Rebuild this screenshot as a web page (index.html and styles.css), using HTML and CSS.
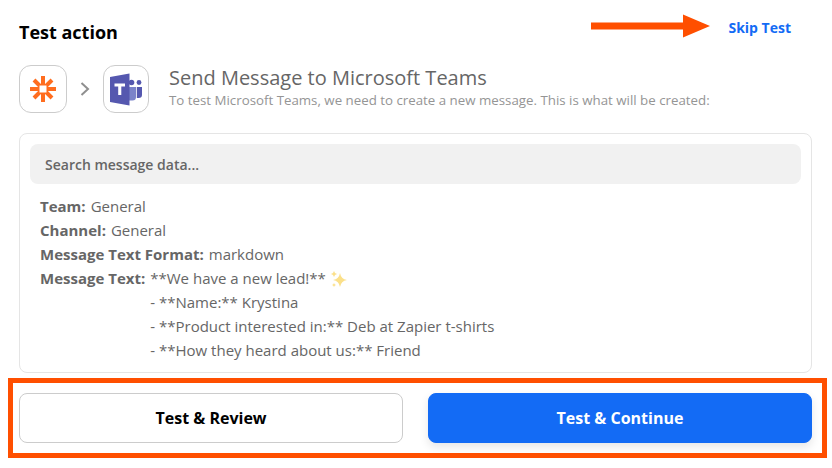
FILE: index.html
```html
<!DOCTYPE html>
<html lang="en">
<head>
    <meta charset="UTF-8">
    <meta name="viewport" content="width=device-width, initial-scale=1.0">
    <title>Test action</title>
    <link rel="stylesheet" href="styles.css">
</head>
<body>
    <div class="page">
        <div class="header">
            <h2>Test action</h2>
            <a class="skip-link" href="#">Skip Test</a>
        </div>
        <!-- Annotation arrow -->
        <svg class="callout-arrow" width="120" height="24" viewBox="0 0 120 24">
            <path d="M0 8.5H92V0.5L119 12L92 23.5V15.5H0Z" fill="#ff4f00"/>
        </svg>

        <div class="step">
            <div class="app-icon">
                <svg width="26" height="26" viewBox="0 0 26 26">
                    <g stroke="#ff6d1f" stroke-width="4">
                        <path d="M0 13H26M13 0V26"/>
                        <path d="M4 4L22 22M22 4L4 22"/>
                    </g>
                    <rect x="9.5" y="9.5" width="7" height="7" fill="#fff"/>
                </svg>
            </div>
            <svg class="chevron" width="10" height="14" viewBox="0 0 10 14">
                <path d="M1.5 1L8 7L1.5 13" fill="none" stroke="#8f8f8f" stroke-width="2"/>
            </svg>
            <div class="app-icon teams">
                <svg width="32" height="33" viewBox="0 0 32 33">
                    <circle cx="21.5" cy="9.5" r="2.8" fill="#5558af"/>
                    <circle cx="29" cy="9.5" r="2.4" fill="#5558af"/>
                    <path d="M19 14H26V24Q26 27.5 22.5 27.5H19Z" fill="#7b83c9"/>
                    <path d="M26.8 14H32V22Q32 25 28.5 25H26.8Z" fill="#5558af"/>
                    <path d="M0 4L19.5 0.5V32.5L0 29Z" fill="#5558af"/>
                    <path d="M4.5 10.5H15V13.5H11.3V22H8.2V13.5H4.5Z" fill="#fff"/>
                </svg>
            </div>
            <div class="step-text">
                <div class="step-title">Send Message to Microsoft Teams</div>
                <div class="step-sub">To test Microsoft Teams, we need to create a new message. This is what will be created:</div>
            </div>
        </div>

        <div class="card">
            <div class="search">Search message data...</div>
            <div class="data-list">
                <div class="data-row"><b>Team:</b><span>General</span></div>
                <div class="data-row"><b>Channel:</b><span>General</span></div>
                <div class="data-row"><b>Message Text Format:</b><span>markdown</span></div>
                <div class="data-row">
                    <b>Message Text:</b>
                    <div>
                        <div>**We have a new lead!**
                            <svg class="sparkles" width="18" height="18" viewBox="0 0 18 18">
                                <path d="M10 3Q11 9 17 10Q11 11 10 17Q9 11 3 10Q9 9 10 3Z" fill="#fbe08a"/>
                                <path d="M4 1Q4.5 3.5 7 4Q4.5 4.5 4 7Q3.5 4.5 1 4Q3.5 3.5 4 1Z" fill="#fbe08a"/>
                                <path d="M4 13Q4.3 14.7 6 15Q4.3 15.3 4 17Q3.7 15.3 2 15Q3.7 14.7 4 13Z" fill="#fbe08a"/>
                            </svg>
                        </div>
                        <div>- **Name:** Krystina</div>
                        <div>- **Product interested in:** Deb at Zapier t-shirts</div>
                        <div>- **How they heard about us:** Friend</div>
                    </div>
                </div>
            </div>
        </div>

        <div class="footer">
            <button class="btn">Test &amp; Review</button>
            <button class="btn btn-primary">Test &amp; Continue</button>
        </div>
    </div>
</body>
</html>
```

FILE: styles.css
```css
body {
    font-family: 'Open Sans', sans-serif;
    background: #fff;
    margin: 0;
    padding: 0;
}
.page {
    position: relative;
    padding: 20px 20px 0 19px;
}
.header {
    display: flex;
    justify-content: space-between;
    align-items: center;
    height: 24px;
}
.header h2 {
    margin: 0;
    font-size: 18px;
    font-weight: 700;
    color: #000;
}
.skip-link {
    font-size: 14px;
    font-weight: 700;
    color: #136bf5;
    text-decoration: none;
    margin: -10px 21px 0 0;
}
.callout-arrow {
    position: absolute;
    left: 591px;
    top: 14px;
}

.step {
    display: flex;
    align-items: center;
    margin-top: 21px;
    height: 48px;
}
.app-icon {
    display: flex;
    align-items: center;
    justify-content: center;
    width: 46px;
    height: 46px;
    border: 1px solid #ccc;
    border-radius: 12px;
}
.teams {
    width: 44px;
}
.chevron {
    margin: 0 13px;
}
.step-text {
    margin-left: 20px;
    margin-top: -6px;
}
.step-title {
    font-size: 20px;
    line-height: 26px;
    margin-bottom: 1px;
    color: #666;
}
.step-sub {
    font-size: 13.3px;
    line-height: 16px;
    color: #959595;
}

.card {
    margin-top: 20px;
    padding: 10px;
    border: 1px solid #e5e5e5;
    border-radius: 8px;
    box-sizing: border-box;
    height: 240px;
}
.search {
    height: 40px;
    line-height: 42px;
    padding-left: 15px;
    background: #f1f1f1;
    border-radius: 8px;
    font-size: 14px;
    font-weight: 600;
    color: #666;
}
.data-list {
    margin-top: 10px;
    padding-left: 10px;
    font-size: 15px;
    line-height: 24px;
    color: #666;
}
.data-row {
    display: flex;
    gap: 5px;
}
.data-row b {
    font-weight: 700;
}
.sparkles {
    vertical-align: -4px;
}

.footer {
    display: flex;
    gap: 25px;
    margin: 5px -15px 0 -11px;
    padding: 10px 10px 10px 6px;
    border: 5px solid #ff4f00;
}
.btn {
    flex: 1;
    height: 50px;
    padding: 0;
    font-family: inherit;
    font-size: 16px;
    font-weight: 700;
    color: #000;
    background: #fff;
    border: 1px solid #ccc;
    border-radius: 8px;
}
.btn-primary {
    color: #fff;
    background: #136bf5;
    border-color: #136bf5;
    box-shadow: 0 4px 10px rgba(0, 0, 0, 0.1);
}
```
